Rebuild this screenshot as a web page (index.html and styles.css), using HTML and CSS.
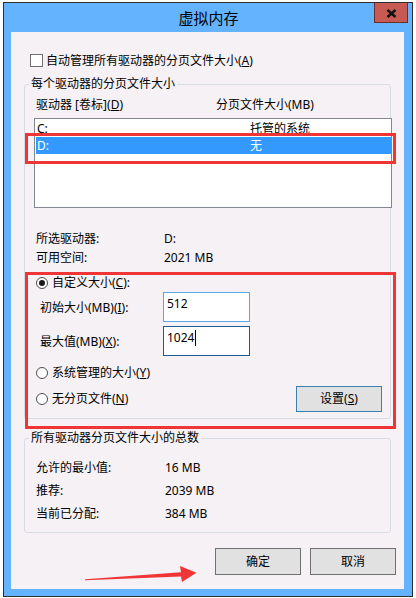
FILE: index.html
```html
<!DOCTYPE html>
<html lang="zh-CN">
<head>
<meta charset="utf-8">
<title>虚拟内存</title>
<link rel="stylesheet" href="styles.css">
</head>
<body>
<div class="window">
  <div class="titlebar">
    <div class="title">虚拟内存</div>
    <div class="close">
      <svg width="11" height="9" viewBox="0 0 11 9"><path d="M1.5 1 L9.5 8 M9.5 1 L1.5 8" stroke="#111" stroke-width="2.4" fill="none"/></svg>
    </div>
  </div>
  <div class="client">
    <div class="check-row"><span class="checkbox"></span><span>自动管理所有驱动器的分页文件大小(<u>A</u>)</span></div>

    <fieldset class="group group-drives">
      <legend>每个驱动器的分页文件大小</legend>
      <div class="list-head"><span>驱动器 [卷标](<u>D</u>)</span><span>分页文件大小(MB)</span></div>
      <div class="listbox">
        <div class="lrow"><span>C:</span><span>托管的系统</span></div>
        <div class="lrow selected"><span>D:</span><span>无</span></div>
      </div>
      <div class="info"><span>所选驱动器:</span><span>D:</span></div>
      <div class="info"><span>可用空间:</span><span>2021 MB</span></div>

      <div class="radio-row first"><span class="radio checked"></span><span>自定义大小(<u>C</u>):</span></div>
      <div class="field-row r1"><span class="flabel">初始大小(MB)(<u>I</u>):</span><div class="input light">512</div></div>
      <div class="field-row r2"><span class="flabel">最大值(MB)(<u>X</u>):</span><div class="input dark">1024<span class="caret"></span></div></div>
      <div class="radio-row second"><span class="radio"></span><span>系统管理的大小(<u>Y</u>)</span></div>
      <div class="radio-row third"><span class="radio"></span><span>无分页文件(<u>N</u>)</span><button class="btn btn-set">设置(<u>S</u>)</button></div>
    </fieldset>

    <fieldset class="group group-total">
      <legend>所有驱动器分页文件大小的总数</legend>
      <div class="trow t1"><span>允许的最小值:</span><span>16 MB</span></div>
      <div class="trow"><span>推荐:</span><span>2039 MB</span></div>
      <div class="trow"><span>当前已分配:</span><span>384 MB</span></div>
    </fieldset>

    <div class="actions">
      <button class="btn btn-dlg">确定</button>
      <button class="btn btn-dlg">取消</button>
    </div>
  </div>
</div>

<div class="mark mark-row"></div>
<div class="mark mark-custom"></div>
<svg class="arrow" width="416" height="598" viewBox="0 0 416 598">
  <polygon points="85,579.3 181,572.2 180,566 196.5,572.8 182,582 181,576.6 85,580.3" fill="#ef3535"/>
</svg>
</body>
</html>
```
FILE: styles.css
```css
html, body {
  margin: 0;
  padding: 0;
  background: #ffffff;
}
body {
  width: 416px;
  height: 598px;
  overflow: hidden;
  position: relative;
  font-family: "Noto Sans", "Noto Sans CJK SC", sans-serif;
  font-size: 12px;
  color: #000;
}
u { text-decoration: underline; text-underline-offset: 1px; }

.window {
  margin: 2px 0 0 3px;
  width: 408px;
  border: 1px solid #2e2e2e;
  background: #63b3fe;
  padding-bottom: 7px;
}
.titlebar {
  height: 29px;
  display: grid;
  grid-template-columns: 1fr auto 1fr;
  align-items: start;
}
.title {
  grid-column: 2;
  font-family: "Noto Sans CJK SC", sans-serif;
  font-size: 15px;
  line-height: 29px;
  padding-left: 1px;
}
.close {
  grid-column: 3;
  justify-self: end;
  margin-right: 4px;
  width: 32px;
  height: 19px;
  background: #c75a52;
  border: 1px solid #6a2e2a;
  border-top: none;
  display: flex;
  align-items: center;
  justify-content: center;
}
.close svg { display: block; margin-top: 1px; }

.client {
  margin: 0 8px 0 7px;
  height: 557px;
  background: #f5f1f5;
  padding: 21px 13px 0 13px;
  box-sizing: border-box;
}
.check-row {
  height: 15px;
  display: flex;
  align-items: center;
  margin-left: 6px;
  line-height: 15px;
}
.checkbox {
  width: 11px;
  height: 11px;
  border: 1px solid #707070;
  background: #fff;
  margin-right: 3px;
}

.group {
  margin: 0;
  padding: 0 0 6px 0;
  border: 1px solid #d5dde3;
  border-radius: 3px;
  min-width: 0;
}
.group legend {
  margin-left: 4px;
  padding: 0 2px;
  line-height: 16px;
  height: 16px;
}
.group-drives { margin-top: 8px; }
.list-head {
  margin-top: 5px;
  height: 16px;
  line-height: 16px;
  padding-left: 11px;
  display: grid;
  grid-template-columns: 180px 1fr;
}
.listbox {
  margin-top: 5px;
  margin-left: 9px;
  width: 358px;
  height: 90px;
  box-sizing: border-box;
  border: 1px solid #828790;
  background: #fff;
  padding: 1px 0 0 1px;
}
.lrow {
  height: 17px;
  line-height: 17px;
  display: grid;
  grid-template-columns: 213px 1fr;
  padding-left: 1px;
}
.lrow.selected {
  background: #3399ff;
  color: #fff;
}
.info {
  height: 19px;
  line-height: 19px;
  padding-left: 11px;
  display: grid;
  grid-template-columns: 128px 1fr;
}
.info:first-of-type { margin-top: 21px; }
.listbox + .info { margin-top: 21px; }

.radio-row {
  display: flex;
  align-items: center;
  padding-left: 11px;
  height: 16px;
  line-height: 16px;
}
.radio-row.first { margin-top: 8px; }
.radio-row.second { margin-top: 9px; }
.radio-row.third { margin-top: 5px; height: 26px; }
.radio {
  width: 10px;
  height: 10px;
  border: 1px solid #4d4d4d;
  border-radius: 50%;
  background: #fff;
  margin-right: 4px;
  position: relative;
  flex: none;
}
.radio.checked::after {
  content: "";
  position: absolute;
  left: 2px;
  top: 2px;
  width: 6px;
  height: 6px;
  border-radius: 50%;
  background: #1a1a1a;
}
.field-row {
  display: flex;
  align-items: center;
  padding-left: 15px;
  height: 30px;
}
.field-row.r1 { margin-top: 1px; }
.field-row.r2 { margin-top: 4px; }
.flabel { width: 123px; }
.input {
  width: 87px;
  height: 30px;
  box-sizing: border-box;
  background: #fff;
  padding: 3px 0 0 3px;
  line-height: 16px;
  display: flex;
  align-items: flex-start;
}
.input.light { border: 1px solid #57a7e2; }
.input.dark { border: 1px solid #1f5b8e; }
.caret {
  display: inline-block;
  width: 1px;
  height: 16px;
  background: #000;
  margin-left: 1px;
}

.btn {
  font-family: inherit;
  font-size: 12px;
  color: #000;
  background: #e1e1e1;
  box-sizing: border-box;
  padding: 0;
  margin: 0;
  line-height: 16px;
}
.btn-set {
  margin-left: auto;
  margin-right: 8px;
  width: 86px;
  height: 26px;
  border: 1px solid #3c7fb1;
}

.group-total { margin-top: 11px; padding-bottom: 7px; }
.trow {
  height: 23px;
  line-height: 23px;
  padding-left: 11px;
  display: grid;
  grid-template-columns: 129px 1fr;
}
.trow.t1 { margin-top: 10px; }

.actions {
  margin-top: 15px;
  margin-right: -5px;
  display: flex;
  justify-content: flex-end;
  gap: 9px;
}
.btn-dlg {
  width: 86px;
  height: 27px;
  border: 1px solid #707070;
}

/* annotation overlays */
.mark {
  position: absolute;
  border: 3px solid #ef3535;
  box-sizing: border-box;
}
.mark-row { left: 25px; top: 133px; width: 371px; height: 31px; }
.mark-custom { left: 25px; top: 272px; width: 371px; height: 157px; }
.arrow { position: absolute; left: 0; top: 0; pointer-events: none; }
```
